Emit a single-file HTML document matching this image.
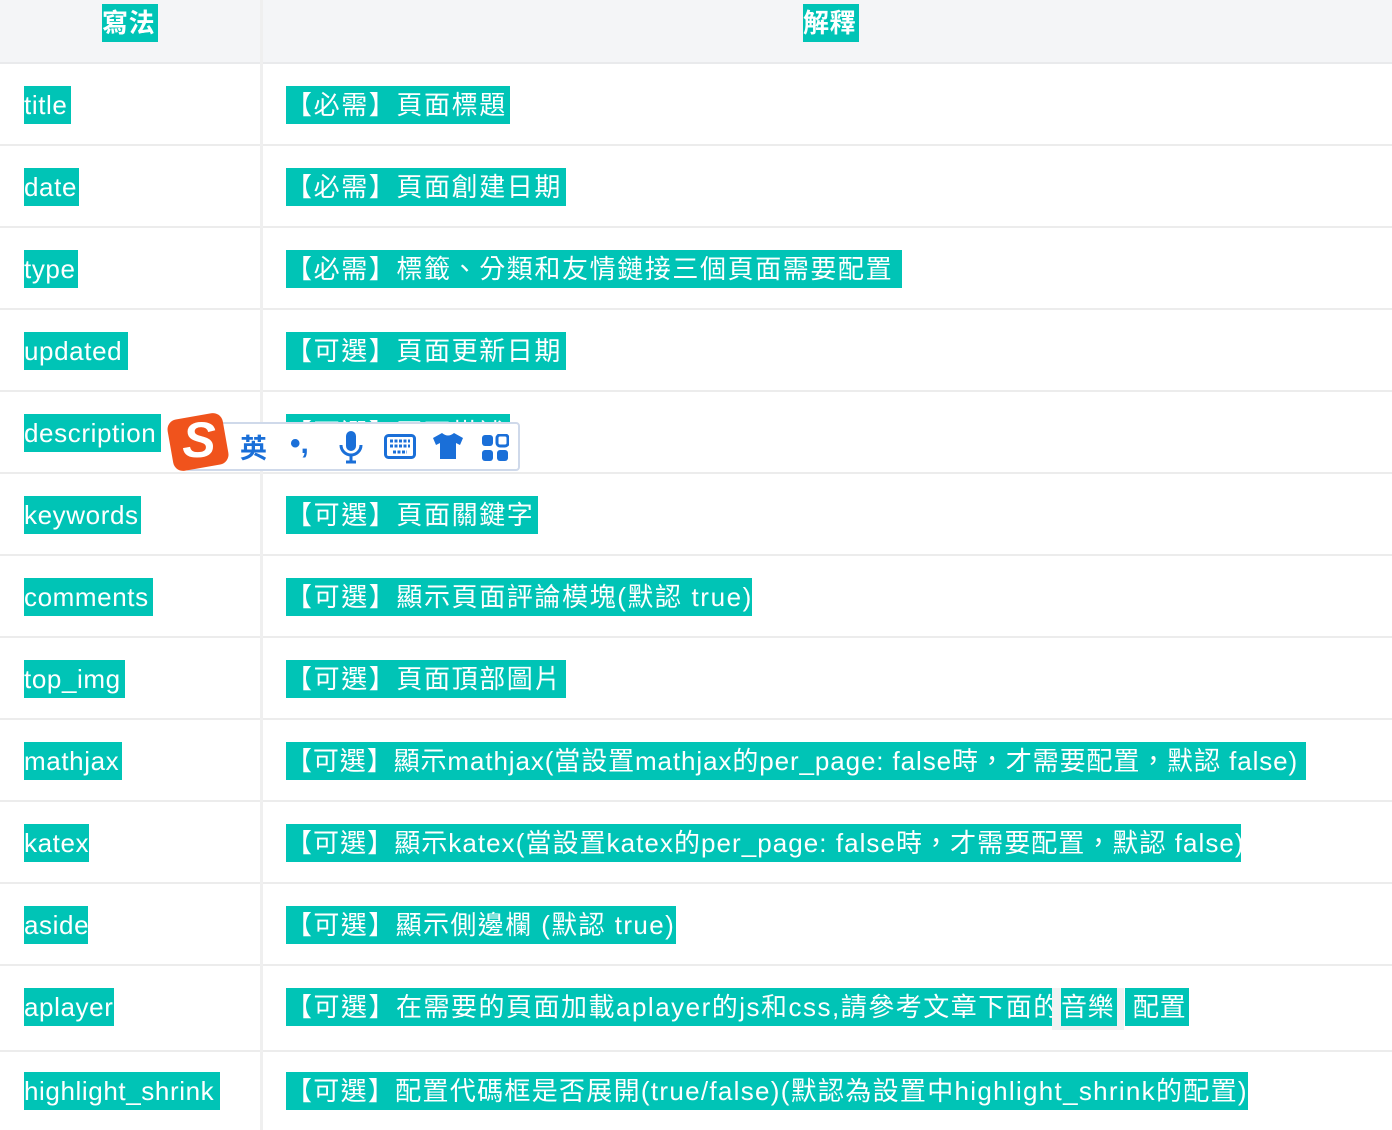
<!DOCTYPE html>
<html><head><meta charset="utf-8"><style>
*{margin:0;padding:0;box-sizing:border-box}
body{width:1392px;height:1130px;overflow:hidden;background:#fff;font-family:"Liberation Sans","Noto Sans CJK TC",sans-serif;position:relative}
.row{position:absolute;left:0;width:1392px;border-bottom:2px solid #ececec}
.hd{top:0;height:64px;background:#f4f5f7;border-bottom:2px solid #e9eaec}
.div{position:absolute;left:260px;top:0;width:3px;height:1130px;background:#efefef}
.h{position:absolute;display:inline-block;height:38px;line-height:38px;background:#00c4b6;color:#fff;font-size:26px;white-space:nowrap;overflow:hidden;letter-spacing:0.6px}
.c{letter-spacing:1.6px}
.code{position:absolute;background:#f1f2f3}
</style></head><body>
<div class="row hd"></div>
<div class="row" style="top:64px;height:82px"></div>
<div class="row" style="top:146px;height:82px"></div>
<div class="row" style="top:228px;height:82px"></div>
<div class="row" style="top:310px;height:82px"></div>
<div class="row" style="top:392px;height:82px"></div>
<div class="row" style="top:474px;height:82px"></div>
<div class="row" style="top:556px;height:82px"></div>
<div class="row" style="top:638px;height:82px"></div>
<div class="row" style="top:720px;height:82px"></div>
<div class="row" style="top:802px;height:82px"></div>
<div class="row" style="top:884px;height:82px"></div>
<div class="row" style="top:966px;height:86px"></div>
<div class="div"></div>

<span class="h" style="left:102px;top:4px;width:56px;font-weight:bold">寫法</span>
<span class="h" style="left:803px;top:4px;width:56px;font-weight:bold">解釋</span>

<span class="h" style="left:24px;top:86px;width:47px">title</span>
<span class="h c" style="left:286px;top:86px;width:224px">【必需】頁面標題</span>
<span class="h" style="left:24px;top:168px;width:55px">date</span>
<span class="h c" style="left:286px;top:168px;width:280px">【必需】頁面創建日期</span>
<span class="h" style="left:24px;top:250px;width:54px">type</span>
<span class="h c" style="left:286px;top:250px;width:616px">【必需】標籤、分類和友情鏈接三個頁面需要配置</span>
<span class="h" style="left:24px;top:332px;width:104px">updated</span>
<span class="h c" style="left:286px;top:332px;width:280px">【可選】頁面更新日期</span>
<span class="h" style="left:24px;top:414px;width:137px">description</span>
<span class="h c" style="left:286px;top:414px;width:224px">【可選】頁面描述</span>
<span class="h" style="left:24px;top:496px;width:117px">keywords</span>
<span class="h c" style="left:286px;top:496px;width:252px">【可選】頁面關鍵字</span>
<span class="h" style="left:24px;top:578px;width:129px">comments</span>
<span class="h" style="left:286px;top:578px;width:466px;letter-spacing:1.6px">【可選】顯示頁面評論模塊(默認 true)</span>
<span class="h" style="left:24px;top:660px;width:101px">top_img</span>
<span class="h c" style="left:286px;top:660px;width:280px">【可選】頁面頂部圖片</span>
<span class="h" style="left:24px;top:742px;width:98px">mathjax</span>
<span class="h" style="left:286px;top:742px;width:1020px;letter-spacing:0.9px">【可選】顯示mathjax(當設置mathjax的per_page: false時，才需要配置，默認 false)</span>
<span class="h" style="left:24px;top:824px;width:65px">katex</span>
<span class="h" style="left:286px;top:824px;width:955px;letter-spacing:1.05px">【可選】顯示katex(當設置katex的per_page: false時，才需要配置，默認 false)</span>
<span class="h" style="left:24px;top:906px;width:64px">aside</span>
<span class="h" style="left:286px;top:906px;width:390px;letter-spacing:1.4px">【可選】顯示側邊欄 (默認 true)</span>
<span class="h" style="left:24px;top:988px;width:90px">aplayer</span>
<span class="h" style="left:286px;top:988px;width:766px;letter-spacing:1.5px">【可選】在需要的頁面加載aplayer的js和css,請參考文章下面的</span>
<div class="code" style="left:1052px;top:988px;width:72px;height:42px"></div>
<span class="h" style="left:1061px;top:988px;width:56px">音樂</span>
<span class="h" style="left:1125px;top:988px;width:64px;padding-left:8px">配置</span>
<span class="h" style="left:24px;top:1072px;width:196px">highlight_shrink</span>
<span class="h" style="left:286px;top:1072px;width:962px;letter-spacing:1.3px">【可選】配置代碼框是否展開(true/false)(默認為設置中highlight_shrink的配置)</span>

<div style="position:absolute;left:185px;top:422px;width:335px;height:49px;background:#fff;border:2px solid #cfd9ea;border-radius:4px"></div>
<div style="position:absolute;left:170px;top:416px;width:56px;height:52px;background:#f0531c;border-radius:10px;transform:rotate(-10deg)"></div>
<div style="position:absolute;left:176px;top:412px;width:46px;height:56px;color:#fff;font:bold 50px/56px 'Liberation Sans',sans-serif;text-align:center;font-style:italic">S</div>
<div style="position:absolute;left:240px;top:430px;color:#1a6fd8;font:bold 27px/34px 'Noto Sans CJK TC',sans-serif">英</div>
<div style="position:absolute;left:290px;top:424px;color:#1a6fd8;font:bold 30px/40px 'Liberation Sans',sans-serif">•,</div>
<svg style="position:absolute;left:338px;top:430px" width="26" height="34" viewBox="0 0 26 34"><rect x="8" y="1" width="10" height="20" rx="5" fill="#1a6fd8"/><path d="M3 15a10 10 0 0 0 20 0" fill="none" stroke="#1a6fd8" stroke-width="3"/><path d="M13 25v6M8 32h10" stroke="#1a6fd8" stroke-width="3"/></svg>
<svg style="position:absolute;left:384px;top:434px" width="32" height="26" viewBox="0 0 32 26"><rect x="1.5" y="1.5" width="29" height="22" rx="3" fill="none" stroke="#1a6fd8" stroke-width="3"/><path d="M6 7h20M6 12h20M9 18h14" stroke="#1a6fd8" stroke-width="3" stroke-dasharray="3 1.5"/></svg>
<svg style="position:absolute;left:432px;top:432px" width="32" height="28" viewBox="0 0 32 28"><path d="M10 1 L1 6 L4 13 L8 11 V27 H24 V11 L28 13 L31 6 L22 1 Q16 6 10 1Z" fill="#1a6fd8"/></svg>
<svg style="position:absolute;left:481px;top:434px" width="28" height="28" viewBox="0 0 28 28"><rect x="1" y="1" width="11" height="11" rx="3" fill="#1a6fd8"/><rect x="16" y="1" width="11" height="11" rx="3" fill="none" stroke="#1a6fd8" stroke-width="3"/><rect x="1" y="16" width="11" height="11" rx="3" fill="#1a6fd8"/><rect x="16" y="16" width="11" height="11" rx="3" fill="#1a6fd8"/></svg>
</body></html>
